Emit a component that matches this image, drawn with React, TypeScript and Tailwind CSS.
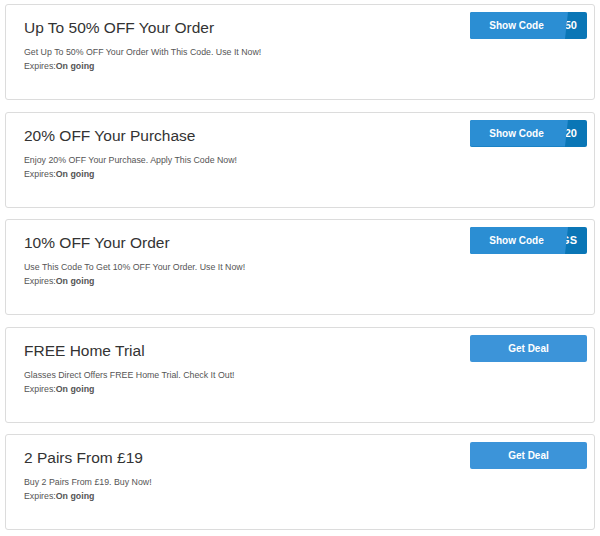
const offers = [
  {
    title: "Up To 50% OFF Your Order",
    desc: "Get Up To 50% OFF Your Order With This Code. Use It Now!",
    code: "50",
  },
  {
    title: "20% OFF Your Purchase",
    desc: "Enjoy 20% OFF Your Purchase. Apply This Code Now!",
    code: "20",
  },
  {
    title: "10% OFF Your Order",
    desc: "Use This Code To Get 10% OFF Your Order. Use It Now!",
    code: "GS",
  },
  {
    title: "FREE Home Trial",
    desc: "Glasses Direct Offers FREE Home Trial. Check It Out!",
  },
  {
    title: "2 Pairs From £19",
    desc: "Buy 2 Pairs From £19. Buy Now!",
  },
];

function CodeButton({ code }: { code: string }) {
  return (
    <div className="relative w-[117px] h-[27px] rounded-[2px] overflow-hidden bg-[#0a76b6] shrink-0">
      <div className="absolute inset-y-0 right-0 flex items-center pr-[10px] text-white text-[11px] font-bold">
        <span className="whitespace-nowrap">{code}</span>
      </div>
      <div className="absolute inset-0 bg-[#2b8ed3] [clip-path:polygon(0_0,98px_0,95px_100%,0_100%)] flex items-center">
        <span className="w-[93px] text-center text-white text-[10px] font-bold">
          Show Code
        </span>
      </div>
    </div>
  );
}

function DealButton() {
  return (
    <div className="w-[117px] h-[27px] rounded-[2px] bg-[#3c94d9] flex items-center justify-center text-white text-[10px] font-bold shrink-0">
      Get Deal
    </div>
  );
}

export default function App() {
  return (
    <div className="w-[600px] h-[536px] bg-white pt-[4px] px-[5px] font-[family-name:'Liberation_Sans',Arial,sans-serif] flex flex-col gap-[11.5px]">
      {offers.map((o) => (
        <div
          key={o.title}
          className="h-[96px] border border-[#dcdcdc] rounded-[3px] flex justify-between pl-[18px] pr-[7px] pt-[7px]"
        >
          <div className="pt-[6px]">
            <div className="text-[15.5px] leading-[20px] text-[#333]">{o.title}</div>
            <div className="mt-[7.1px] text-[8.8px] leading-[14px] text-[#555]">{o.desc}</div>
            <div className="text-[8.8px] leading-[14px] text-[#555]">
              Expires:<span className="font-bold">On going</span>
            </div>
          </div>
          {o.code ? <CodeButton code={o.code} /> : <DealButton />}
        </div>
      ))}
    </div>
  );
}
